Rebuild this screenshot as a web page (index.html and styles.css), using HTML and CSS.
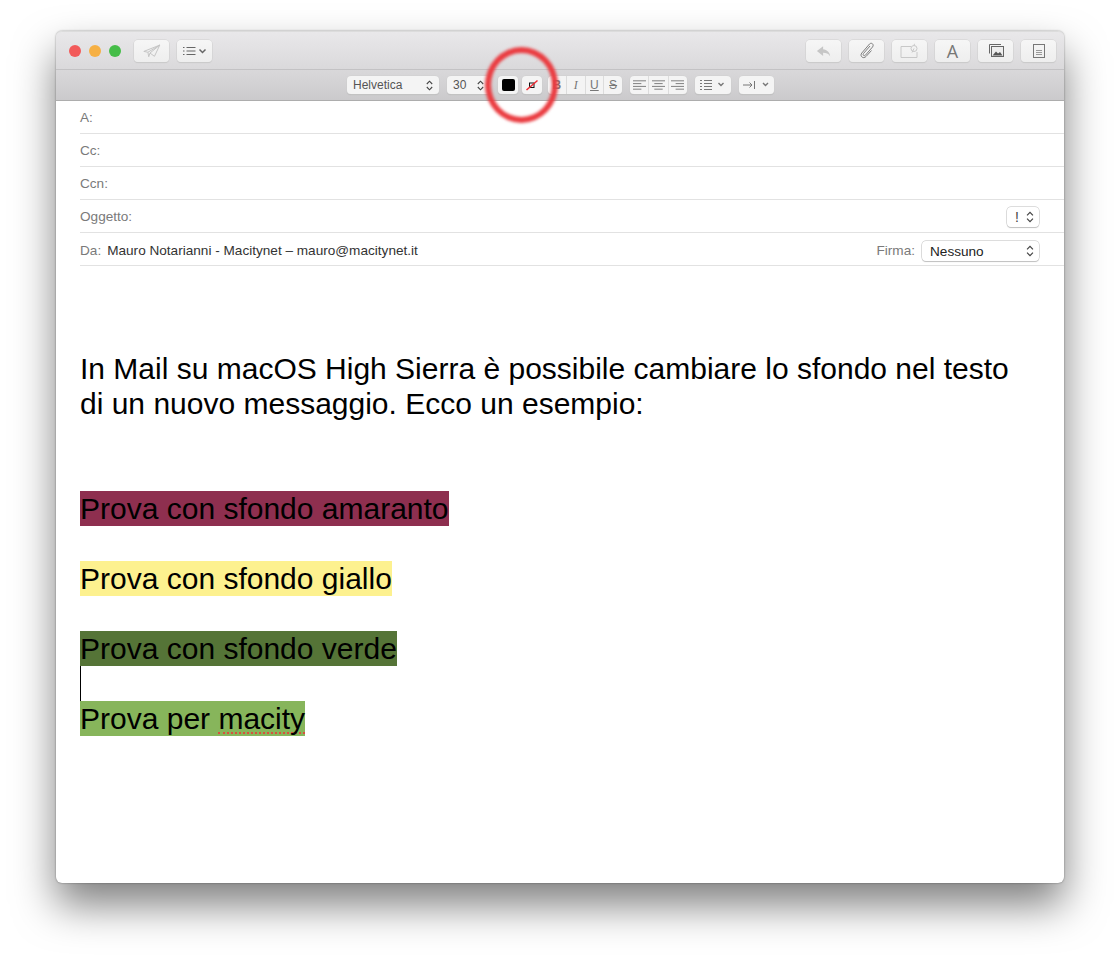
FILE: index.html
```html
<!doctype html>
<html lang="it">
<head>
	<meta charset="UTF-8">
	<title>Nuovo messaggio</title>
	<link rel="stylesheet" href="styles.css">
</head>
<body>
	<div class="window">
		<div class="titlebar">
			<div class="lights">
				<span class="light red"></span>
				<span class="light yellow"></span>
				<span class="light green"></span>
			</div>
			<span class="btn first">
				<svg width="18" height="14" viewBox="0 0 22 16" fill="none" stroke="#c4c4c4" stroke-width="1.200"><path d="M1 8.500 20.500 .8 14 14.500 8.500 10.500 7 15 6 9.500zM6 9.500 20.500 .8 8.500 10.500"/></svg>
			</span>
			<span class="btn list">
				<svg width="24" height="10" viewBox="0 0 24 10" fill="none" stroke="#666"><path d="M0 1.500h1.500M0 5h1.500M0 8.500h1.500M3.500 1.500h9M3.500 5h9M3.500 8.500h9"/><path d="M16.500 3.500 19.500 6.500 22.500 3.500" stroke-width="1.500"/></svg>
			</span>
			<div class="spacer"></div>
			<span class="btn">
				<svg width="16" height="13" viewBox="0 0 18 14"><path d="M8 1 1 6.500 8 12V8.500c3.500 0 6 1 8 4-.5-4.500-3.500-7.500-8-8z" fill="#c6c6c6"/></svg>
			</span>
			<span class="btn">
				<svg width="16" height="18" viewBox="0 0 16 18" fill="none" stroke="#808080"><path d="M11 4 4.500 11.500c-1.200 1.500.6 3 1.900 1.700L13.500 5C15.500 2.500 12.500 0 10.500 2L2.800 11c-2.500 3 1.500 6.500 4.200 3.500L12.500 8.500"/></svg>
			</span>
			<span class="btn">
				<svg width="20" height="16" viewBox="0 0 20 16" fill="none" stroke="#c8c8c8"><path d="M11 3.500H1v11h16V9"/><circle cx="14" cy="5.500" r="3"/><path d="M14 5.500 12 9.500M14.500 .8 14 2.500"/></svg>
			</span>
			<span class="btn letter">A</span>
			<span class="btn">
				<svg width="16" height="14" viewBox="0 0 16 14" fill="none" stroke="#666"><path d="M1.500 9.500V.5H13"/><rect x="3.500" y="2.500" width="12" height="10" fill="#eee"/><path d="M4.500 11.500 8 7.500l2 2 2-1.500 2.500 3.500z" fill="#555" stroke="none"/></svg>
			</span>
			<span class="btn">
				<svg width="12" height="14" viewBox="0 0 12 14" fill="none" stroke="#777"><rect x=".5" y=".5" width="11" height="13"/><path d="M3 6.500h6M3 8.500h6M3 10.500h6" stroke="#999"/></svg>
			</span>
		</div>
		<div class="formatbar">
			<span class="ctl font">Helvetica
				<svg class="updown" width="7" height="11" viewBox="0 0 7 11"><path d="M.8 4 3.500 1.200 6.200 4M.8 7 3.500 9.800 6.200 7"/></svg>
			</span>
			<span class="ctl size">30
				<svg class="updown" width="7" height="11" viewBox="0 0 7 11"><path d="M.8 4 3.500 1.200 6.200 4M.8 7 3.500 9.800 6.200 7"/></svg>
			</span>
			<span class="ctl swatch"><span class="black"></span></span>
			<span class="ctl swatch">
				<svg width="14" height="12" viewBox="0 0 14 12" fill="none"><rect x="4.500" y="4" width="4.500" height="4.500" stroke="#111"/><path d="M1.500 11 12.500 1.500" stroke="#ee2a32" stroke-width="1.500"/></svg>
			</span>
			<div class="group style">
				<span class="seg bold">B</span>
				<span class="seg ital">I</span>
				<span class="seg under">U</span>
				<span class="seg strike">S</span>
			</div>
			<div class="group align">
				<span class="seg"><svg width="13" height="10" viewBox="0 0 14 10"><path d="M0 .5h14M0 3.500h9M0 6.500h14M0 9.500h9"/></svg></span>
				<span class="seg"><svg width="13" height="10" viewBox="0 0 14 10"><path d="M0 .5h14M2.500 3.500h9M0 6.500h14M2.500 9.500h9"/></svg></span>
				<span class="seg"><svg width="13" height="10" viewBox="0 0 14 10"><path d="M0 .5h14M5 3.500h9M0 6.500h14M5 9.500h9"/></svg></span>
			</div>
			<span class="ctl drop lists">
				<svg width="26" height="10" viewBox="0 0 26 10"><path d="M0 .5h2M0 3.500h2M0 6.500h2M0 9.500h2M4 .5h8M4 3.500h8M4 6.500h8M4 9.500h8"/><path d="M18.500 3 21 5.500 23.500 3" stroke-width="1.400"/></svg>
			</span>
			<span class="ctl drop indent">
				<svg width="28" height="10" viewBox="0 0 28 10"><path d="M0 5h9M6.500 2.500 9 5 6.500 7.500M11.500 1v8"/><path d="M20 3 22.500 5.500 25 3" stroke-width="1.400"/></svg>
			</span>
		</div>
		<div class="headers">
			<div class="row"><span class="label">A:</span></div>
			<div class="row"><span class="label">Cc:</span></div>
			<div class="row"><span class="label">Ccn:</span></div>
			<div class="row">
				<span class="label">Oggetto:</span>
				<div class="spacer"></div>
				<span class="select prio">!
					<svg class="updown" width="8" height="12" viewBox="0 0 7 11"><path d="M.8 4 3.500 1.200 6.200 4M.8 7 3.500 9.800 6.200 7"/></svg>
				</span>
			</div>
			<div class="row sender">
				<span class="label">Da:</span>
				<span class="from">Mauro Notarianni - Macitynet – mauro@macitynet.it</span>
				<div class="spacer"></div>
				<span class="label sign">Firma:</span>
				<span class="select firma">Nessuno
					<svg class="updown" width="8" height="12" viewBox="0 0 7 11"><path d="M.8 4 3.500 1.200 6.200 4M.8 7 3.500 9.800 6.200 7"/></svg>
				</span>
			</div>
		</div>
		<div class="message">
			<p>In Mail su macOS High Sierra è possibile cambiare lo sfondo nel testo di un nuovo messaggio. Ecco un esempio:</p>
			<p class="blank"></p>
			<p class="blank"></p>
			<p><span class="hl amaranto">Prova con sfondo amaranto</span></p>
			<p class="blank"></p>
			<p><span class="hl giallo">Prova con sfondo giallo</span></p>
			<p class="blank"></p>
			<p><span class="hl verde">Prova con sfondo verde</span></p>
			<p class="blank caret"></p>
			<p><span class="hl prato">Prova per <span class="typo">macity</span></span></p>
		</div>
		<div class="circle"></div>
	</div>
</body>
</html>
```

FILE: styles.css
```css
*{
	margin: 0;
	padding: 0;
	box-sizing: border-box;
}
body{
	background: #fff;
	padding: 31px 56px 0;
	height: 963px;
	overflow: hidden;
	font-family: "Liberation Sans", Arial, sans-serif;
}
.window{
	position: relative;
	width: 1008px;
	height: 852px;
	background: #fff;
	border-radius: 6px;
	box-shadow: 0 22px 42px rgba(0,0,0,.5), 0 0 2px rgba(0,0,0,.45);
	overflow: visible;
}
.titlebar{
	display: flex;
	align-items: center;
	gap: 8px;
	height: 39px;
	padding: 0 8px 0 13px;
	background: linear-gradient(#e9e8ea, #dad9db);
	border-top: 1px solid #dcdcdc;
	border-bottom: 1px solid #c3c2c4;
	border-radius: 6px 6px 0 0;
}
.lights{
	display: flex;
	gap: 8px;
	margin-right: 5px;
}
.light{
	width: 12px;
	height: 12px;
	border-radius: 50%;
}
.red{ background: #f25a5a; }
.yellow{ background: #f6b044; }
.green{ background: #45bd48; }
.spacer{
	flex: 1;
}
.btn{
	display: flex;
	align-items: center;
	justify-content: center;
	width: 35px;
	height: 22px;
	margin-top: 1px;
	background: linear-gradient(#f6f6f6, #eeeeee);
	border-radius: 4px;
	box-shadow: 0 0 0 .5px #cfcfcf, 0 1px 1px #c4c4c4;
}
.btn.letter{
	font-family: "Open Sans", sans-serif;
	font-size: 18px;
	color: #777;
}
.formatbar{
	display: flex;
	align-items: center;
	height: 31px;
	padding-left: 291px;
	background: linear-gradient(#d9d8da, #cbcacc);
	border-bottom: 1px solid #adadad;
}
.ctl,.group{
	height: 18px;
	background: #f4f4f4;
	border-radius: 4px;
	box-shadow: 0 0 0 .5px #d0d0d0, 0 1px 1px #b4b4b4;
	font-size: 12px;
	color: #555;
}
.ctl{
	display: flex;
	align-items: center;
}
.updown{
	fill: none;
	stroke: #444;
	stroke-width: 1.100;
}
.font{
	justify-content: space-between;
	width: 92px;
	margin-right: 8px;
	padding: 0 6px;
}
.size{
	justify-content: space-between;
	width: 43px;
	margin-right: 8px;
	padding: 0 6px;
}
.swatch{
	justify-content: center;
	width: 20px;
	margin-right: 4px;
}
.black{
	width: 13px;
	height: 12px;
	background: #000;
	border-radius: 2px;
}
.group{
	display: flex;
}
.seg{
	display: flex;
	align-items: center;
	justify-content: center;
	flex: 1;
	border-left: 1px solid #dcdcdc;
	font-size: 12px;
	color: #777;
}
.seg:first-child{
	border-left: 0;
}
.seg svg,.drop svg{
	fill: none;
	stroke: #777;
}
.style{
	width: 74px;
	margin-left: 2px;
	margin-right: 8px;
}
.bold{ font-weight: bold; }
.ital{
	font-style: italic;
	font-family: "Liberation Serif", serif;
}
.under{ text-decoration: underline; }
.strike{ text-decoration: line-through; }
.align{
	width: 57px;
	margin-right: 8px;
}
.drop{
	justify-content: center;
}
.lists{
	width: 36px;
	margin-right: 8px;
}
.indent{
	width: 35px;
}
.headers{
	display: flex;
	flex-direction: column;
}
.row{
	display: flex;
	align-items: center;
	height: 33px;
	margin-left: 24px;
	padding-right: 25px;
	border-bottom: 1px solid #e2e2e2;
	font-size: 13.600px;
}
.sender{
	padding-top: 2px;
}
.label{
	color: #7a7a7a;
}
.from{
	margin-left: 6px;
	color: #333;
}
.sign{
	margin-right: 7px;
}
.select{
	display: flex;
	align-items: center;
	justify-content: space-between;
	background: #fff;
	border-radius: 4px;
	box-shadow: 0 0 0 .5px #bcbcbc, 0 1px 1px #c8c8c8;
	color: #222;
}
.prio{
	width: 32px;
	height: 20px;
	margin-top: 2px;
	padding: 0 5px 0 8px;
	font-size: 14px;
	color: #444;
}
.firma{
	width: 117px;
	height: 20px;
	margin-top: 2px;
	padding: 0 5px 0 8px;
}
.message{
	padding: 85px 30px 0 24px;
	font-size: 30px;
	line-height: 35px;
	color: #000;
}
.blank{
	height: 35px;
}
.caret{
	border-left: 1px solid #000;
}
.hl{
	display: inline-block;
	height: 35px;
}
.amaranto{ background: #8e2f4f; }
.giallo{ background: #fdf18f; }
.verde{ background: #557437; }
.prato{ background: #87b55b; }
.typo{
	display: inline-block;
	height: 33px;
	border-bottom: 2px dotted #d9503f;
}
.circle{
	position: absolute;
	left: 429px;
	top: 16px;
	width: 73px;
	height: 76px;
	border: 6px solid #ea3b40;
	border-radius: 50%;
	filter: blur(1.500px);
}
```
